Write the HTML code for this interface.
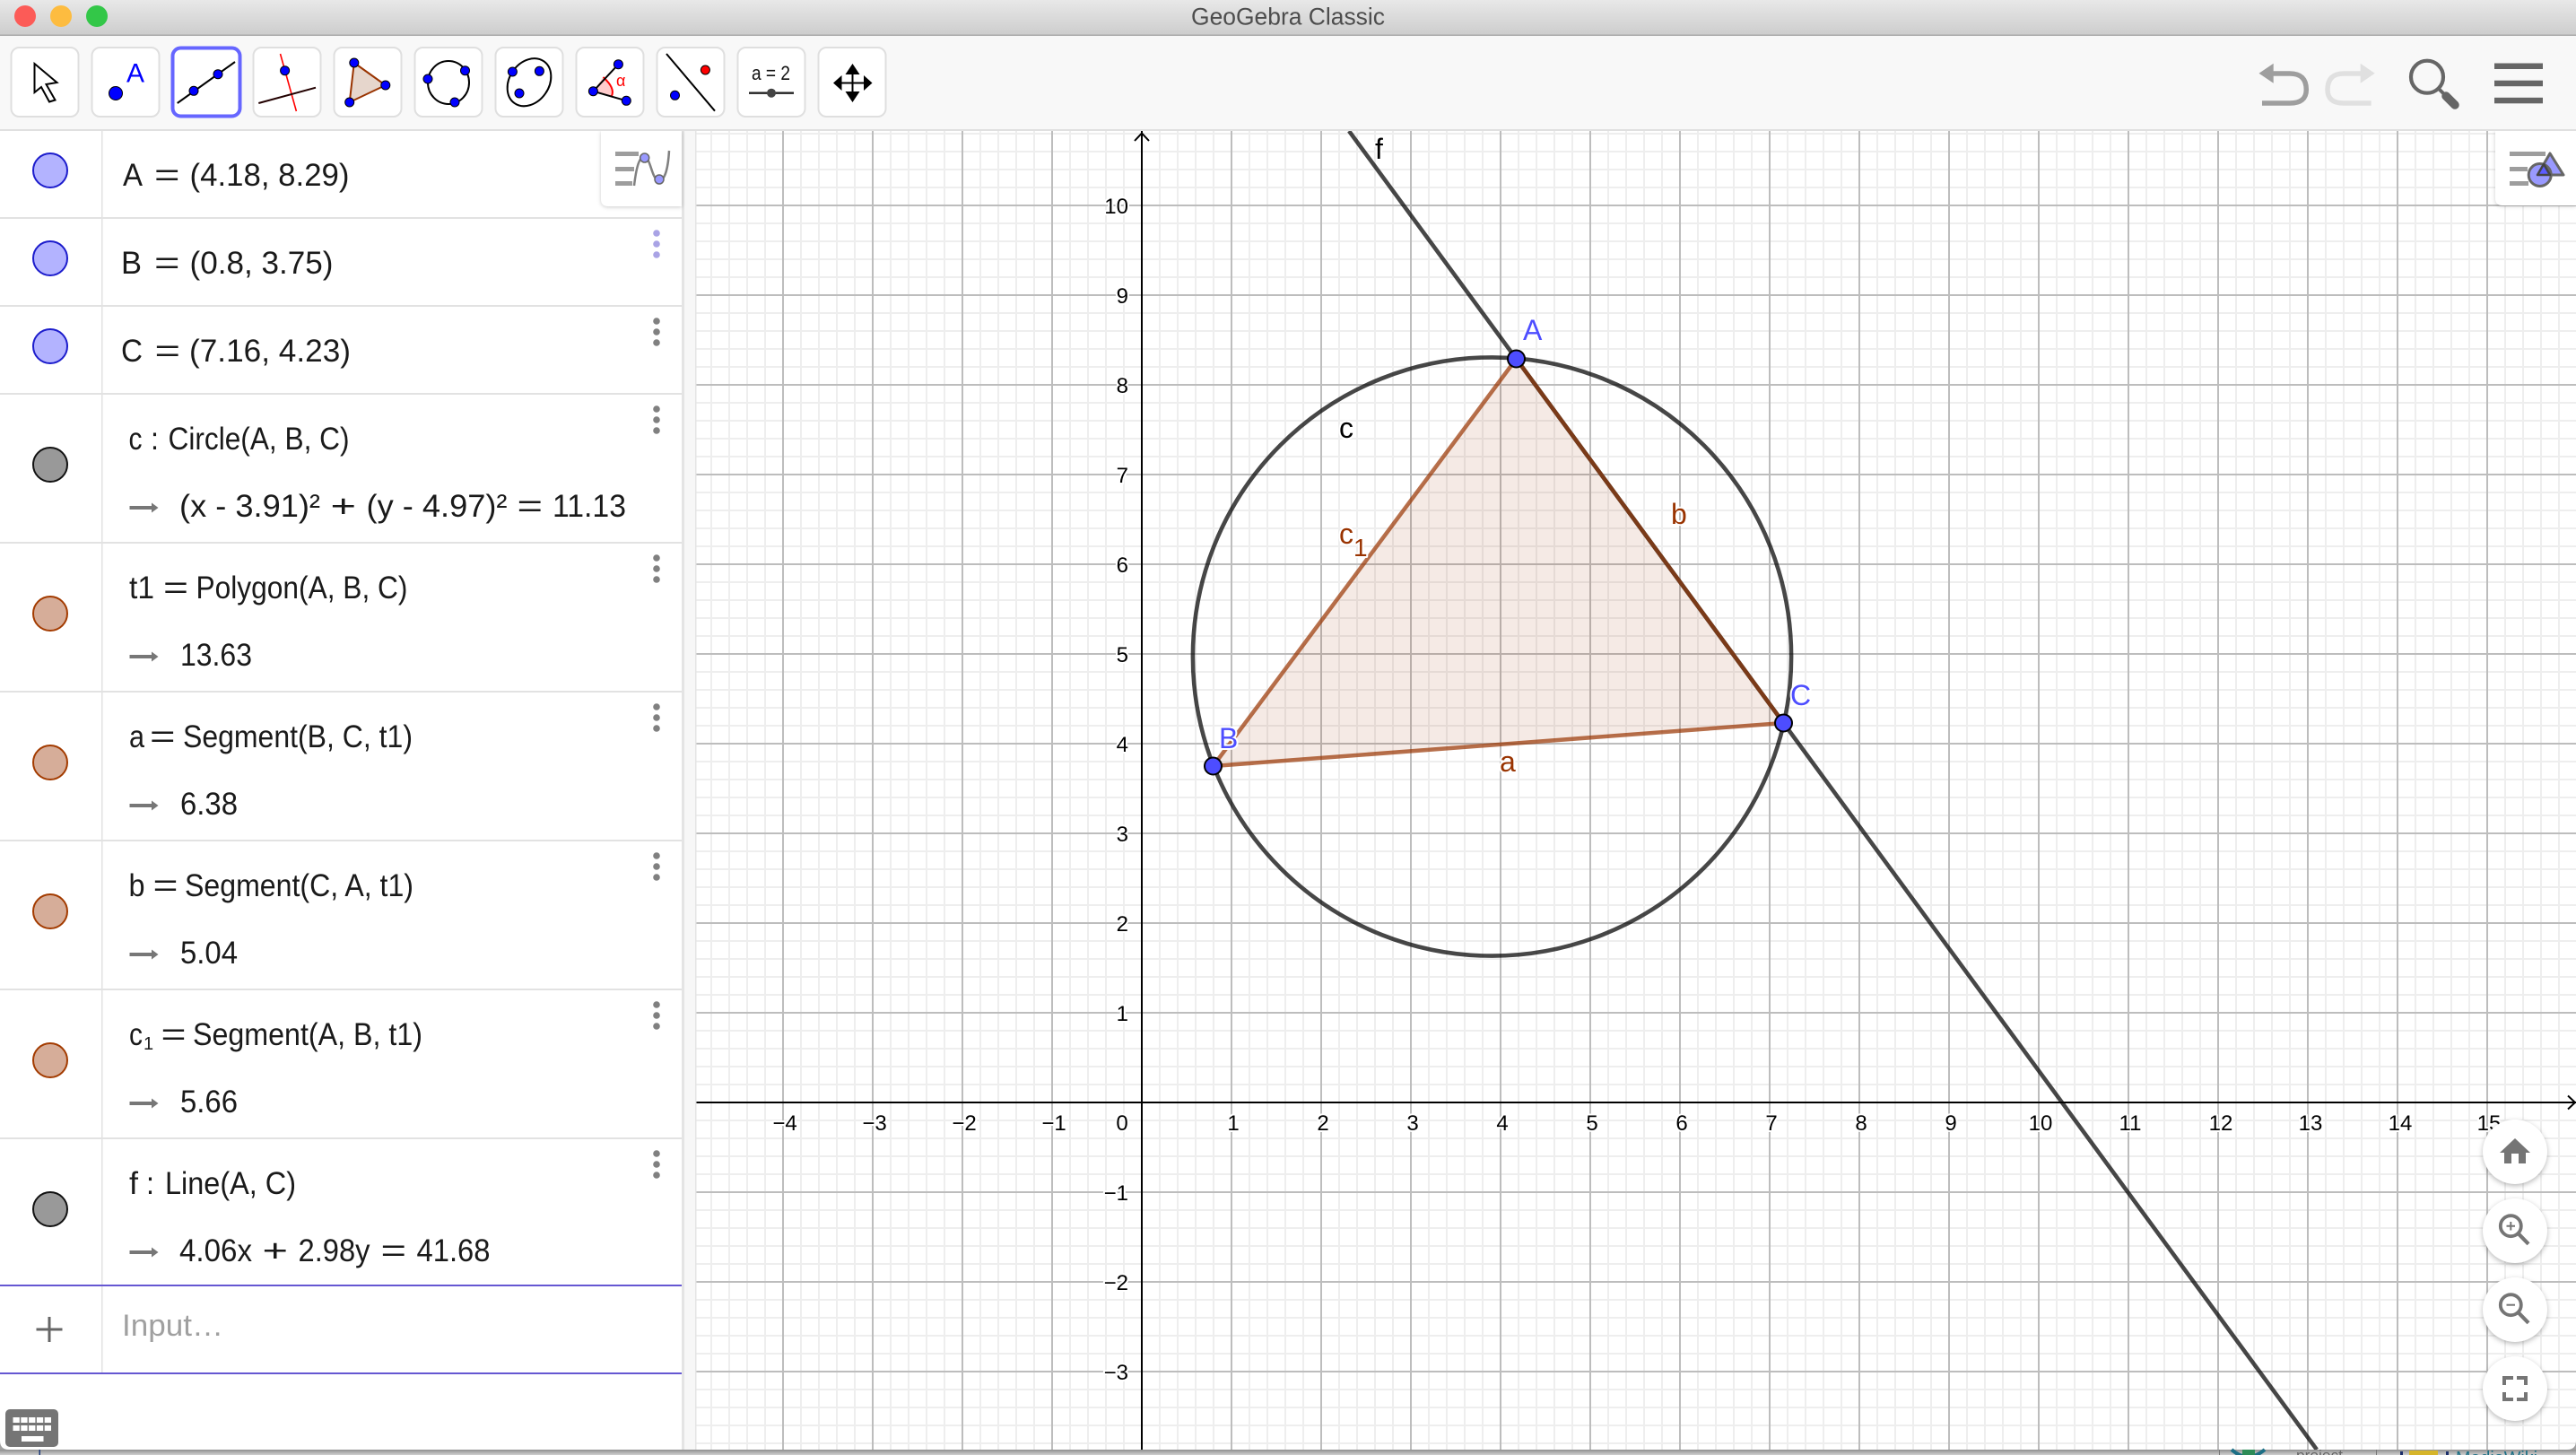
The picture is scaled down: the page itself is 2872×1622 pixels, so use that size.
<!DOCTYPE html>
<html><head><meta charset="utf-8"><title>GeoGebra Classic</title>
<style>html,body{margin:0;padding:0;background:#fff;width:2872px;height:1622px;overflow:hidden}svg{display:block}
text{font-family:"Liberation Sans",Arial,sans-serif}
.av{font-size:35.5px;fill:#1a1a1a}
.ax{font-size:24px;fill:#000;paint-order:stroke;stroke:#fff;stroke-width:4px;stroke-linejoin:round}
.lb{font-size:32px;paint-order:stroke;stroke:#fff;stroke-width:4px;stroke-linejoin:round}
</style></head><body>
<svg width="2872" height="1622" viewBox="0 0 2872 1622" xmlns="http://www.w3.org/2000/svg">
<defs>
<pattern id="gm" patternUnits="userSpaceOnUse" x="1272" y="1228" width="20" height="20"><rect x="0" y="0" width="2" height="20" fill="#eeeeee"/><rect x="0" y="0" width="20" height="2" fill="#eeeeee"/></pattern>
<pattern id="gM" patternUnits="userSpaceOnUse" x="1272" y="1228" width="100" height="100"><rect x="0" y="0" width="2" height="100" fill="#bdbdbd"/><rect x="0" y="0" width="100" height="2" fill="#bdbdbd"/></pattern>
<linearGradient id="tb" x1="0" y1="0" x2="0" y2="1"><stop offset="0" stop-color="#e8e8e8"/><stop offset="1" stop-color="#cdcdcd"/></linearGradient>
<linearGradient id="bt" x1="0" y1="0" x2="0" y2="1"><stop offset="0" stop-color="#8f8f8f"/><stop offset="1" stop-color="#d0d0d0"/></linearGradient>
<g id="arr"><rect x="144.5" y="-2" width="26" height="4" fill="#777"/><path d="M169 -5.5L176.5 0L169 5.5Z" fill="#777"/></g>
<g id="dots" fill="#808080"><circle cx="732" cy="17" r="3.8"/><circle cx="732" cy="29" r="3.8"/><circle cx="732" cy="41" r="3.8"/></g>
<clipPath id="gc"><rect x="776" y="146" width="2096" height="1470"/></clipPath>
</defs>

<rect width="2872" height="1622" fill="#fff"/>

<!-- graphics view -->
<g clip-path="url(#gc)">
<rect x="776" y="146" width="2096" height="1470" fill="url(#gm)"/>
<rect x="776" y="146" width="2096" height="1470" fill="url(#gM)"/>
<rect x="1272" y="146" width="2" height="1470" fill="#000"/>
<rect x="776" y="1228" width="2096" height="2" fill="#000"/>
<path d="M1265 157L1273 148.5L1281 157" fill="none" stroke="#000" stroke-width="2"/>
<path d="M2863 1221.5L2871 1229L2863 1236.5" fill="none" stroke="#000" stroke-width="2"/>

<path d="M1690.5 400L1352.5 854L1988.5 806Z" fill="#993300" fill-opacity=".1"/>
<circle cx="1663.5" cy="732" r="333.6" fill="none" stroke="#000" stroke-opacity=".72" stroke-width="4.6"/>
<path d="M1504 146L2583 1616" stroke="#000" stroke-opacity=".72" stroke-width="4.6" fill="none"/>
<path d="M1352.5 854L1988.5 806" stroke="#993300" stroke-opacity=".7" stroke-width="4.5" fill="none"/>
<path d="M1690.5 400L1352.5 854" stroke="#993300" stroke-opacity=".7" stroke-width="4.5" fill="none"/>
<path d="M1988.5 806L1690.5 400" stroke="#7a3a18" stroke-width="4.5" fill="none"/>

<g class="ax-group">
<text class="ax" x="875" y="1260" text-anchor="middle">−4</text>
<text class="ax" x="975" y="1260" text-anchor="middle">−3</text>
<text class="ax" x="1075" y="1260" text-anchor="middle">−2</text>
<text class="ax" x="1175" y="1260" text-anchor="middle">−1</text>
<text class="ax" x="1251" y="1260" text-anchor="middle">0</text>
<text class="ax" x="1375" y="1260" text-anchor="middle">1</text>
<text class="ax" x="1475" y="1260" text-anchor="middle">2</text>
<text class="ax" x="1575" y="1260" text-anchor="middle">3</text>
<text class="ax" x="1675" y="1260" text-anchor="middle">4</text>
<text class="ax" x="1775" y="1260" text-anchor="middle">5</text>
<text class="ax" x="1875" y="1260" text-anchor="middle">6</text>
<text class="ax" x="1975" y="1260" text-anchor="middle">7</text>
<text class="ax" x="2075" y="1260" text-anchor="middle">8</text>
<text class="ax" x="2175" y="1260" text-anchor="middle">9</text>
<text class="ax" x="2275" y="1260" text-anchor="middle">10</text>
<text class="ax" x="2375" y="1260" text-anchor="middle">11</text>
<text class="ax" x="2476" y="1260" text-anchor="middle">12</text>
<text class="ax" x="2576" y="1260" text-anchor="middle">13</text>
<text class="ax" x="2676" y="1260" text-anchor="middle">14</text>
<text class="ax" x="2775" y="1260" text-anchor="middle">15</text>
<text class="ax" x="1258" y="238" text-anchor="end">10</text>
<text class="ax" x="1258" y="338" text-anchor="end">9</text>
<text class="ax" x="1258" y="438" text-anchor="end">8</text>
<text class="ax" x="1258" y="538" text-anchor="end">7</text>
<text class="ax" x="1258" y="638" text-anchor="end">6</text>
<text class="ax" x="1258" y="738" text-anchor="end">5</text>
<text class="ax" x="1258" y="838" text-anchor="end">4</text>
<text class="ax" x="1258" y="938" text-anchor="end">3</text>
<text class="ax" x="1258" y="1038" text-anchor="end">2</text>
<text class="ax" x="1258" y="1138" text-anchor="end">1</text>
<text class="ax" x="1258" y="1338" text-anchor="end">−1</text>
<text class="ax" x="1258" y="1438" text-anchor="end">−2</text>
<text class="ax" x="1258" y="1538" text-anchor="end">−3</text>
</g>

<text class="lb" x="1698" y="379" fill="#4d4dff">A</text>
<text class="lb" x="1359" y="834" fill="#4d4dff">B</text>
<text class="lb" x="1996" y="786" fill="#4d4dff">C</text>
<text class="lb" x="1493" y="488" fill="#000">c</text>
<text class="lb" x="1493" y="606" fill="#993300">c</text>
<text class="lb" x="1509" y="620" fill="#993300" style="font-size:28px">1</text>
<text class="lb" x="1672" y="860" fill="#993300">a</text>
<text class="lb" x="1863" y="584" fill="#993300">b</text>
<text class="lb" x="1533" y="177" fill="#000">f</text>

<circle cx="1690.5" cy="400" r="9.5" fill="#4d4dff" stroke="#000" stroke-width="2"/>
<circle cx="1352.5" cy="854" r="9.5" fill="#4d4dff" stroke="#000" stroke-width="2"/>
<circle cx="1988.5" cy="806" r="9.5" fill="#4d4dff" stroke="#000" stroke-width="2"/>

<!-- graphics style bar -->
<path d="M2782 146H2872V229H2790Q2782 229 2782 221Z" fill="#fff" style="filter:drop-shadow(0 1px 2px rgba(0,0,0,.2))"/>
<rect x="2798" y="169" width="40" height="5" fill="#9d9d9d"/>
<rect x="2798" y="186" width="20" height="5" fill="#9d9d9d"/>
<rect x="2798" y="202" width="21" height="5" fill="#9d9d9d"/>
<path d="M2843 171L2858 195H2829Z" fill="#9999ff" stroke="#666" stroke-width="3" stroke-linejoin="round"/>
<circle cx="2831.7" cy="195" r="12.5" fill="#9999ff" stroke="#666" stroke-width="3"/>
<path d="M2836 183L2843 195H2829Z" fill="#5c5cff" stroke="#444" stroke-width="2.5" stroke-linejoin="round"/>

<!-- zoom buttons -->
<g style="filter:drop-shadow(0 2px 3px rgba(0,0,0,.28))" fill="#fff">
<circle cx="2804" cy="1284" r="36"/><circle cx="2804" cy="1372" r="36"/><circle cx="2804" cy="1460" r="36"/><circle cx="2804" cy="1548" r="36"/>
</g>
<path d="M2804 1269L2821 1285H2816V1297H2808V1286H2800V1297H2792V1285H2787Z" fill="#757575"/>
<g fill="none" stroke="#757575">
<circle cx="2799.3" cy="1366.7" r="11.5" stroke-width="3.8"/><path d="M2807.5 1375L2819 1386.8" stroke-width="4.2"/><path d="M2799.3 1362V1371.5M2794.5 1366.7H2804" stroke-width="2"/>
<circle cx="2799.3" cy="1454.7" r="11.5" stroke-width="3.8"/><path d="M2807.5 1463L2819 1474.8" stroke-width="4.2"/><path d="M2794.5 1454.7H2804" stroke-width="2"/>
<path d="M2792 1544V1536H2802M2806 1536H2816V1544M2816 1552V1560H2806M2802 1560H2792V1552" stroke-width="4"/>
</g>
</g>

<!-- splitter -->
<rect x="760" y="146" width="16" height="1470" fill="#f7f7f7"/>
<rect x="760" y="146" width="3" height="1470" fill="#e4e4e4"/>
<rect x="775" y="146" width="1.5" height="1470" fill="#e4e4e4"/>

<!-- algebra view -->
<rect x="0" y="146" width="760" height="1470" fill="#fff"/>
<rect x="113" y="146" width="1.5" height="1385" fill="#e2e2e2"/>
<g fill="#e2e2e2">
<rect x="0" y="242" width="760" height="2"/><rect x="0" y="340" width="760" height="2"/><rect x="0" y="438" width="760" height="2"/><rect x="0" y="604" width="760" height="2"/><rect x="0" y="770" width="760" height="2"/><rect x="0" y="936" width="760" height="2"/><rect x="0" y="1102" width="760" height="2"/><rect x="0" y="1268" width="760" height="2"/>
</g>
<rect x="0" y="1432" width="760" height="2" fill="#6557d2"/>
<rect x="0" y="1530" width="760" height="2" fill="#6557d2"/>

<g stroke-width="2">
<circle cx="56" cy="190" r="19" fill="#b3b3ff" stroke="#1c1ccc"/>
<circle cx="56" cy="288" r="19" fill="#b3b3ff" stroke="#1c1ccc"/>
<circle cx="56" cy="386" r="19" fill="#b3b3ff" stroke="#1c1ccc"/>
<circle cx="56" cy="518" r="19" fill="#999" stroke="#111"/>
<circle cx="56" cy="684" r="19" fill="#d6ad99" stroke="#a33b00"/>
<circle cx="56" cy="850" r="19" fill="#d6ad99" stroke="#a33b00"/>
<circle cx="56" cy="1016" r="19" fill="#d6ad99" stroke="#a33b00"/>
<circle cx="56" cy="1182" r="19" fill="#d6ad99" stroke="#a33b00"/>
<circle cx="56" cy="1348" r="19" fill="#999" stroke="#111"/>
</g>

<!-- row A -->
<text class="av" x="137" y="207" textLength="22" lengthAdjust="spacingAndGlyphs">A</text>
<text class="av" x="172" y="207" textLength="28.5" lengthAdjust="spacingAndGlyphs">=</text>
<text class="av" x="211.5" y="207" textLength="178" lengthAdjust="spacingAndGlyphs">(4.18, 8.29)</text>
<!-- row B -->
<text class="av" x="135" y="305" textLength="23" lengthAdjust="spacingAndGlyphs">B</text>
<text class="av" x="172" y="305" textLength="28.5" lengthAdjust="spacingAndGlyphs">=</text>
<text class="av" x="211.5" y="305" textLength="160" lengthAdjust="spacingAndGlyphs">(0.8, 3.75)</text>
<!-- row C -->
<text class="av" x="135" y="403" textLength="24" lengthAdjust="spacingAndGlyphs">C</text>
<text class="av" x="172.5" y="403" textLength="28.5" lengthAdjust="spacingAndGlyphs">=</text>
<text class="av" x="211" y="403" textLength="180" lengthAdjust="spacingAndGlyphs">(7.16, 4.23)</text>
<!-- c -->
<text class="av" x="143.5" y="501" textLength="15" lengthAdjust="spacingAndGlyphs">c</text>
<text class="av" x="168" y="501" textLength="9" lengthAdjust="spacingAndGlyphs">:</text>
<text class="av" x="187.5" y="501" textLength="202" lengthAdjust="spacingAndGlyphs">Circle(A, B, C)</text>
<text class="av" x="200" y="576" textLength="157" lengthAdjust="spacingAndGlyphs">(x - 3.91)²</text>
<text class="av" x="368.5" y="576" textLength="28.5" lengthAdjust="spacingAndGlyphs">+</text>
<text class="av" x="408.5" y="576" textLength="157" lengthAdjust="spacingAndGlyphs">(y - 4.97)²</text>
<text class="av" x="576.5" y="576" textLength="28.5" lengthAdjust="spacingAndGlyphs">=</text>
<text class="av" x="616" y="576" textLength="82" lengthAdjust="spacingAndGlyphs">11.13</text>
<!-- t1 -->
<text class="av" x="144" y="667" textLength="28" lengthAdjust="spacingAndGlyphs">t1</text>
<text class="av" x="182" y="667" textLength="28" lengthAdjust="spacingAndGlyphs">=</text>
<text class="av" x="218.5" y="667" textLength="236" lengthAdjust="spacingAndGlyphs">Polygon(A, B, C)</text>
<text class="av" x="201" y="742" textLength="80" lengthAdjust="spacingAndGlyphs">13.63</text>
<!-- a -->
<text class="av" x="144" y="833" textLength="17" lengthAdjust="spacingAndGlyphs">a</text>
<text class="av" x="167" y="833" textLength="28.5" lengthAdjust="spacingAndGlyphs">=</text>
<text class="av" x="204" y="833" textLength="256" lengthAdjust="spacingAndGlyphs">Segment(B, C, t1)</text>
<text class="av" x="201" y="908" textLength="64" lengthAdjust="spacingAndGlyphs">6.38</text>
<!-- b -->
<text class="av" x="143.5" y="999" textLength="18" lengthAdjust="spacingAndGlyphs">b</text>
<text class="av" x="170.5" y="999" textLength="28" lengthAdjust="spacingAndGlyphs">=</text>
<text class="av" x="206" y="999" textLength="255" lengthAdjust="spacingAndGlyphs">Segment(C, A, t1)</text>
<text class="av" x="201" y="1074" textLength="64" lengthAdjust="spacingAndGlyphs">5.04</text>
<!-- c1 -->
<text class="av" x="144" y="1165" textLength="15" lengthAdjust="spacingAndGlyphs">c</text>
<text class="av" x="160" y="1170" style="font-size:20px">1</text>
<text class="av" x="179.5" y="1165" textLength="28" lengthAdjust="spacingAndGlyphs">=</text>
<text class="av" x="215" y="1165" textLength="256" lengthAdjust="spacingAndGlyphs">Segment(A, B, t1)</text>
<text class="av" x="201" y="1240" textLength="64" lengthAdjust="spacingAndGlyphs">5.66</text>
<!-- f -->
<text class="av" x="144" y="1331" textLength="10" lengthAdjust="spacingAndGlyphs">f</text>
<text class="av" x="163" y="1331" textLength="9" lengthAdjust="spacingAndGlyphs">:</text>
<text class="av" x="184" y="1331" textLength="146" lengthAdjust="spacingAndGlyphs">Line(A, C)</text>
<text class="av" x="200" y="1406" textLength="81" lengthAdjust="spacingAndGlyphs">4.06x</text>
<text class="av" x="292.5" y="1406" textLength="28.5" lengthAdjust="spacingAndGlyphs">+</text>
<text class="av" x="332.5" y="1406" textLength="80" lengthAdjust="spacingAndGlyphs">2.98y</text>
<text class="av" x="424.5" y="1406" textLength="28.5" lengthAdjust="spacingAndGlyphs">=</text>
<text class="av" x="464.5" y="1406" textLength="82" lengthAdjust="spacingAndGlyphs">41.68</text>
<text class="av" x="136" y="1489" textLength="113" lengthAdjust="spacingAndGlyphs" style="fill:#a0a0a0;font-size:34px">Input…</text>
<path d="M55 1468V1496M40.5 1482H69.5" stroke="#666" stroke-width="3" fill="none"/>

<use href="#arr" x="0" y="566"/><use href="#arr" x="0" y="732"/><use href="#arr" x="0" y="898"/><use href="#arr" x="0" y="1064"/><use href="#arr" x="0" y="1230"/><use href="#arr" x="0" y="1396"/>
<g fill="#a9a3e5"><circle cx="732" cy="260" r="3.8"/><circle cx="732" cy="272" r="3.8"/><circle cx="732" cy="284" r="3.8"/></g>
<use href="#dots" x="0" y="341"/><use href="#dots" x="0" y="439"/><use href="#dots" x="0" y="605"/><use href="#dots" x="0" y="771"/><use href="#dots" x="0" y="937"/><use href="#dots" x="0" y="1103"/><use href="#dots" x="0" y="1269"/>

<!-- algebra style bar -->
<path d="M670 146H760V230H678Q670 230 670 222Z" fill="#fff" style="filter:drop-shadow(0 1px 2px rgba(0,0,0,.2))"/>
<rect x="686" y="169" width="26" height="5" fill="#9d9d9d"/>
<rect x="686" y="186" width="21" height="5" fill="#9d9d9d"/>
<rect x="686" y="202" width="19" height="5" fill="#9d9d9d"/>
<path d="M707 207C709 190 712 175 718 175C726 175 726 201 735 201C742 201 745 185 746 168" fill="none" stroke="#808080" stroke-width="2.5"/>
<circle cx="718.7" cy="176" r="5" fill="#9999ff" stroke="#666" stroke-width="1.5"/>
<circle cx="735" cy="200" r="5" fill="#9999ff" stroke="#666" stroke-width="1.5"/>

<!-- keyboard -->
<rect x="6" y="1571" width="59" height="42" rx="5" fill="#757575"/>
<path d="M14.5 1583H57.5M14.5 1592H57.5" stroke="#fff" stroke-width="6" stroke-dasharray="7.3 1.5" fill="none"/>
<rect x="24" y="1601" width="24.5" height="6" fill="#fff"/>

<!-- title bar -->
<rect x="0" y="0" width="2872" height="39" fill="url(#tb)"/>
<rect x="0" y="38.5" width="2872" height="1.5" fill="#a9a9a9"/>
<circle cx="28" cy="18" r="12" fill="#fc5b57"/><circle cx="68" cy="18" r="12" fill="#fdbc40"/><circle cx="108" cy="18" r="12" fill="#33c748"/>
<text x="1328" y="27.5" textLength="216" lengthAdjust="spacingAndGlyphs" style="font-size:27px;fill:#4d4d4d">GeoGebra Classic</text>

<!-- toolbar -->
<rect x="0" y="40" width="2872" height="104" fill="#f8f8f8"/>
<rect x="0" y="144" width="2872" height="2" fill="#e0e0e0"/>
<g fill="#fff" stroke="#dfdfdf" stroke-width="2">
<rect x="12.5" y="53" width="75" height="77" rx="9"/><rect x="102.5" y="53" width="75" height="77" rx="9"/>
<rect x="282.5" y="53" width="75" height="77" rx="9"/><rect x="372.5" y="53" width="75" height="77" rx="9"/><rect x="462.5" y="53" width="75" height="77" rx="9"/><rect x="552.5" y="53" width="75" height="77" rx="9"/><rect x="642.5" y="53" width="75" height="77" rx="9"/><rect x="732.5" y="53" width="75" height="77" rx="9"/><rect x="822.5" y="53" width="75" height="77" rx="9"/><rect x="912.5" y="53" width="75" height="77" rx="9"/>
</g>
<rect x="192.5" y="53.5" width="75" height="76" rx="9" fill="#fff" stroke="#6666ff" stroke-width="4"/>

<path d="M38.5 71L63.5 92L51.5 94L61.5 111.5L55 113.5L46 97L38.5 103Z" fill="#fff" stroke="#000" stroke-width="2" stroke-linejoin="miter"/>

<circle cx="129" cy="104" r="7.5" fill="#0000ff" stroke="#000" stroke-width="1"/>
<text x="141" y="91.5" style="font-size:30px;fill:#0000ff">A</text>

<path d="M197.7 115L262 69" stroke="#000" stroke-width="2" fill="none"/>
<circle cx="216" cy="101.3" r="5" fill="#0000ff" stroke="#000"/><circle cx="243" cy="82.7" r="5" fill="#0000ff" stroke="#000"/>

<path d="M312.5 60L330.4 124" stroke="#ff0000" stroke-width="1.6" fill="none"/>
<path d="M288.3 115L352 97.7" stroke="#220000" stroke-width="2" fill="none"/>
<circle cx="317.6" cy="78.7" r="5" fill="#0000ff" stroke="#000"/>

<path d="M394.8 70L429.8 95L389.7 114Z" fill="#e6d6cc" stroke="#993300" stroke-width="2"/>
<circle cx="394.8" cy="70" r="5" fill="#0000ff" stroke="#000"/><circle cx="429.8" cy="95" r="5" fill="#0000ff" stroke="#000"/><circle cx="389.7" cy="114" r="5" fill="#0000ff" stroke="#000"/>

<ellipse cx="500" cy="92" rx="23" ry="24" fill="none" stroke="#000" stroke-width="2"/>
<circle cx="477" cy="88" r="5" fill="#0000ff" stroke="#000"/><circle cx="518.5" cy="78.7" r="5" fill="#0000ff" stroke="#000"/><circle cx="507" cy="114" r="5" fill="#0000ff" stroke="#000"/>

<ellipse cx="590" cy="91.7" rx="28.5" ry="22" transform="rotate(-55 590 91.7)" fill="none" stroke="#000" stroke-width="2"/>
<circle cx="571.4" cy="80" r="5" fill="#0000ff" stroke="#000"/><circle cx="601.4" cy="79.3" r="5" fill="#0000ff" stroke="#000"/><circle cx="579" cy="104" r="5" fill="#0000ff" stroke="#000"/>

<path d="M661.4 101.7L672.5 86Q686 98 682 107Z" fill="#ffcccc"/>
<path d="M672.5 86Q686 98 682 107" fill="none" stroke="#ff0000" stroke-width="2"/>
<path d="M689.4 71.7L661.4 101.7L698.3 112.3" fill="none" stroke="#000" stroke-width="2"/>
<circle cx="689.4" cy="71.7" r="5" fill="#0000ff" stroke="#000"/><circle cx="661.4" cy="101.7" r="5" fill="#0000ff" stroke="#000"/><circle cx="698.3" cy="112.3" r="5" fill="#0000ff" stroke="#000"/>
<text x="687" y="96" style="font-size:18px;fill:#ff0000">α</text>

<path d="M743 60L797 123.7" stroke="#000" stroke-width="2" fill="none"/>
<circle cx="786.4" cy="78" r="5" fill="#ff0000" stroke="#000"/><circle cx="752.5" cy="106.3" r="5" fill="#0000ff" stroke="#000"/>

<text x="838" y="89" textLength="43" lengthAdjust="spacingAndGlyphs" style="font-size:22px;fill:#111">a = 2</text>
<path d="M835 103.7H885" stroke="#222" stroke-width="2.4" fill="none"/>
<circle cx="860" cy="103.7" r="5" fill="#444"/>

<path d="M950.5 71L958.5 83H942.5ZM950.5 114L958.5 102H942.5ZM929 92.5L938.5 84V101ZM972.5 92.5L963 84V101Z" fill="#000"/>
<path d="M950.5 80V105M936 92.5H965" stroke="#000" stroke-width="2" fill="none"/>

<!-- undo / redo / search / menu -->
<path d="M2518.5 81.7L2534.7 70.7V92.7Z" fill="#9e9e9e"/>
<path d="M2533 82H2553Q2571.3 82 2571.3 100Q2571.3 115 2553 115H2522" fill="none" stroke="#9e9e9e" stroke-width="5.5"/>
<path d="M2647.7 81.7L2631.7 70.7V92.7Z" fill="#e0e0e0"/>
<path d="M2633 82H2613Q2595 82 2595 100Q2595 115 2613 115H2643.7" fill="none" stroke="#e0e0e0" stroke-width="5.5"/>
<circle cx="2706" cy="85.7" r="18" fill="none" stroke="#666" stroke-width="4.2"/>
<path d="M2719 99L2726 106" stroke="#666" stroke-width="4" fill="none"/>
<path d="M2727 107L2737 117" stroke="#666" stroke-width="9.5" stroke-linecap="round" fill="none"/>
<rect x="2781" y="70.5" width="54" height="6.5" fill="#666"/><rect x="2781" y="89.7" width="54" height="6.5" fill="#666"/><rect x="2781" y="108.8" width="54" height="6.5" fill="#666"/>

<!-- window bottom edge / desktop behind -->
<rect x="0" y="1616" width="2872" height="6" fill="url(#bt)"/>
<rect x="43.5" y="1616" width="1.5" height="6" fill="#1c3a78"/>
<rect x="2474" y="1616" width="1" height="6" fill="#777"/>
<rect x="2649" y="1616" width="1" height="6" fill="#777"/>
<path d="M2488 1616Q2506 1632 2525 1616" fill="none" stroke="#1d6f85" stroke-width="4"/>
<rect x="2500" y="1616" width="14" height="6" fill="#2e8b57"/>
<text x="2560" y="1628" textLength="52" lengthAdjust="spacingAndGlyphs" style="font-size:17px;fill:#666">project</text>
<rect x="2676" y="1618" width="3" height="4" fill="#1c2f6b"/><rect x="2727" y="1618" width="3" height="4" fill="#1c2f6b"/>
<rect x="2686" y="1617" width="32" height="5" fill="#d6b52a"/>
<text x="2738" y="1632" textLength="91" lengthAdjust="spacingAndGlyphs" style="font-size:20px;fill:#1d6f85">MediaWiki</text>
<path d="M0 1606Q0 1616 10 1616H0Z" fill="#a0a0a0"/>
<path d="M2872 1606Q2872 1616 2862 1616H2872Z" fill="#a0a0a0"/>
</svg>
</body></html>
